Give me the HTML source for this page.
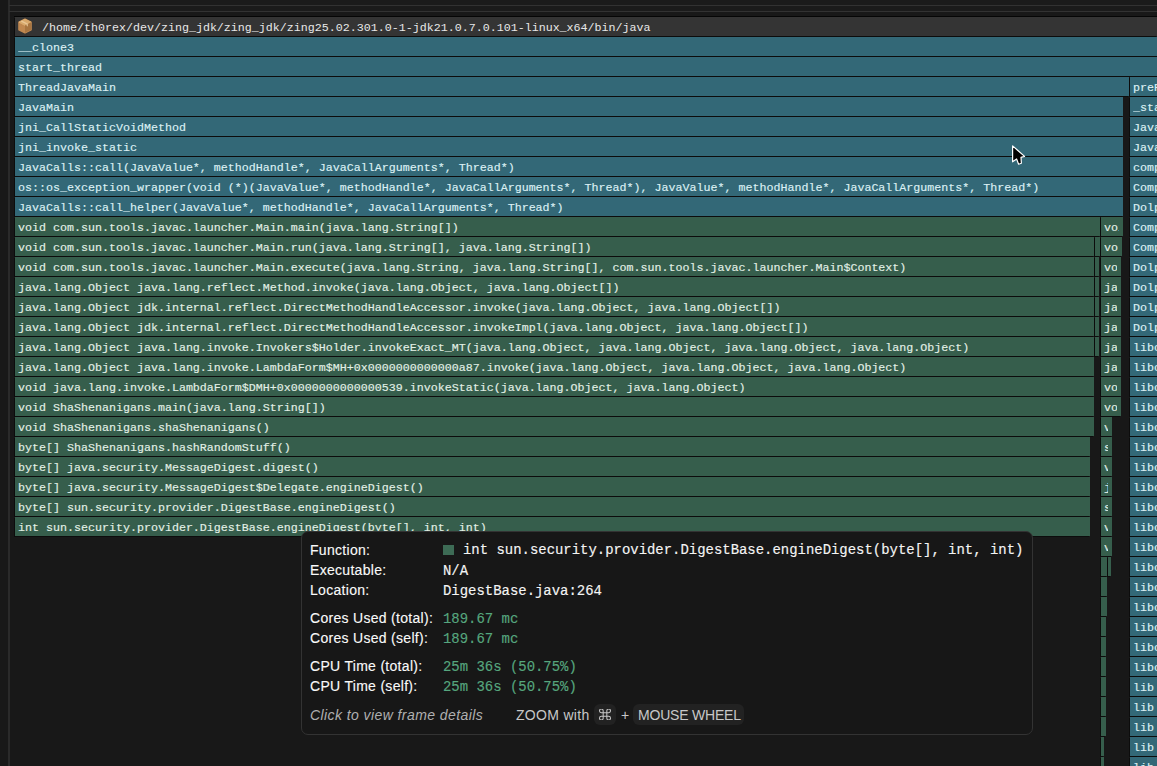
<!DOCTYPE html>
<html><head><meta charset="utf-8">
<style>
html,body{margin:0;padding:0;}
body{width:1157px;height:766px;overflow:hidden;background:#181818;position:relative;font-family:"Liberation Mono",monospace;}
.vl{position:absolute;left:8px;top:0;width:2px;height:766px;background:#2a2a2a;}
.hl{position:absolute;left:9px;height:1px;width:1148px;background:#323232;}
.topbg{position:absolute;left:9px;top:0;width:1148px;height:11px;background:#1b1b1b;}
.hdr{position:absolute;left:15px;top:17px;width:1142px;height:19px;background:#343434;color:#e8e8e8;font-size:11.67px;line-height:22px;box-shadow:-1px 1px 0 #0c0c0c;}
.hdr span{position:absolute;left:27px;top:0;white-space:pre;}
.box{position:absolute;left:3px;top:1px;width:14px;height:16px;}
.c{position:absolute;height:19px;line-height:23px;font-size:11.67px;white-space:pre;overflow:hidden;box-sizing:border-box;box-shadow:-1px 1px 0 #0c0c0c;}
.c span{display:block;overflow:hidden;margin:0 4px 0 3px;height:19px;}
.c.b{background:#336877;color:#dcf0f4;-webkit-text-stroke:0.15px currentColor;}
.c.g{background:#365e4c;color:#e2f0e6;-webkit-text-stroke:0.15px currentColor;}
.tip{position:absolute;left:301px;top:531px;width:732px;height:204px;box-sizing:border-box;background:#171717;border:1px solid #333;border-radius:7px;font-family:"Liberation Sans",sans-serif;color:#f0f0f0;font-size:14px;}
.tip .l{position:absolute;left:8px;white-space:pre;letter-spacing:0.3px;color:#fafafa;-webkit-text-stroke:0.12px #fafafa;}
.tip .v{position:absolute;left:141px;white-space:pre;font-family:"Liberation Mono",monospace;font-size:13.95px;margin-top:1px;-webkit-text-stroke:0.15px currentColor;color:#f4f4f4;}
.tip .gr{color:#56a67e;}
.sq{position:absolute;left:141px;top:13px;width:11px;height:10px;background:#3d6b55;}
.foot{position:absolute;top:172px;left:9px;white-space:pre;}
.tip .it{font-style:italic;color:#b0b0b0;letter-spacing:0.42px;-webkit-text-stroke:0;}
.tip .ft{color:#c8c8c8;-webkit-text-stroke:0;}
.kbd{position:absolute;background:#222222;border-radius:6px;color:#bdbdbd;}
</style></head><body>
<div class="topbg"></div>
<div class="vl"></div>
<div style="position:absolute;left:14px;top:16px;width:1143px;height:1px;background:#050505"></div>
<div class="hl" style="top:5px"></div>
<div class="hl" style="top:11px"></div>
<div class="hdr"><svg class="box" viewBox="0 0 14 16"><g stroke-linejoin="round"><polygon points="7,1.2 13,4.2 13,11.8 7,14.8 1,11.8 1,4.2" fill="#c08850" stroke="#c08850" stroke-width="1.6"/><polygon points="7,1.2 13,4.2 7,7.4 1,4.2" fill="#d9a96c" stroke="#d9a96c" stroke-width="1"/><polygon points="7,7.4 13,4.2 13,11.8 7,14.8" fill="#a87540"/><polygon points="4,2.6 10,5.8 10,8.6 8.6,7.9 8.6,6.6 2.6,3.4" fill="#f0d2a4" opacity="0.7"/></g></svg><span>/home/th0rex/dev/zing_jdk/zing_jdk/zing25.02.301.0-1-jdk21.0.7.0.101-linux_x64/bin/java</span></div>
<div class="c b" style="left:15px;top:37px;width:1235px"><span>__clone3</span></div>
<div class="c b" style="left:15px;top:57px;width:1235px"><span>start_thread</span></div>
<div class="c b" style="left:15px;top:77px;width:1114px"><span>ThreadJavaMain</span></div>
<div class="c b" style="left:15px;top:97px;width:1108px"><span>JavaMain</span></div>
<div class="c b" style="left:15px;top:117px;width:1108px"><span>jni_CallStaticVoidMethod</span></div>
<div class="c b" style="left:15px;top:137px;width:1108px"><span>jni_invoke_static</span></div>
<div class="c b" style="left:15px;top:157px;width:1108px"><span>JavaCalls::call(JavaValue*, methodHandle*, JavaCallArguments*, Thread*)</span></div>
<div class="c b" style="left:15px;top:177px;width:1108px"><span>os::os_exception_wrapper(void (*)(JavaValue*, methodHandle*, JavaCallArguments*, Thread*), JavaValue*, methodHandle*, JavaCallArguments*, Thread*)</span></div>
<div class="c b" style="left:15px;top:197px;width:1108px"><span>JavaCalls::call_helper(JavaValue*, methodHandle*, JavaCallArguments*, Thread*)</span></div>
<div class="c g" style="left:15px;top:217px;width:1085px"><span>void com.sun.tools.javac.launcher.Main.main(java.lang.String[])</span></div>
<div class="c g" style="left:15px;top:237px;width:1079px"><span>void com.sun.tools.javac.launcher.Main.run(java.lang.String[], java.lang.String[])</span></div>
<div class="c g" style="left:15px;top:257px;width:1079px"><span>void com.sun.tools.javac.launcher.Main.execute(java.lang.String, java.lang.String[], com.sun.tools.javac.launcher.Main$Context)</span></div>
<div class="c g" style="left:15px;top:277px;width:1079px"><span>java.lang.Object java.lang.reflect.Method.invoke(java.lang.Object, java.lang.Object[])</span></div>
<div class="c g" style="left:15px;top:297px;width:1079px"><span>java.lang.Object jdk.internal.reflect.DirectMethodHandleAccessor.invoke(java.lang.Object, java.lang.Object[])</span></div>
<div class="c g" style="left:15px;top:317px;width:1079px"><span>java.lang.Object jdk.internal.reflect.DirectMethodHandleAccessor.invokeImpl(java.lang.Object, java.lang.Object[])</span></div>
<div class="c g" style="left:15px;top:337px;width:1079px"><span>java.lang.Object java.lang.invoke.Invokers$Holder.invokeExact_MT(java.lang.Object, java.lang.Object, java.lang.Object, java.lang.Object)</span></div>
<div class="c g" style="left:15px;top:357px;width:1079px"><span>java.lang.Object java.lang.invoke.LambdaForm$MH+0x0000000000000a87.invoke(java.lang.Object, java.lang.Object, java.lang.Object)</span></div>
<div class="c g" style="left:15px;top:377px;width:1079px"><span>void java.lang.invoke.LambdaForm$DMH+0x0000000000000539.invokeStatic(java.lang.Object, java.lang.Object)</span></div>
<div class="c g" style="left:15px;top:397px;width:1079px"><span>void ShaShenanigans.main(java.lang.String[])</span></div>
<div class="c g" style="left:15px;top:417px;width:1079px"><span>void ShaShenanigans.shaShenanigans()</span></div>
<div class="c g" style="left:15px;top:437px;width:1075px"><span>byte[] ShaShenanigans.hashRandomStuff()</span></div>
<div class="c g" style="left:15px;top:457px;width:1075px"><span>byte[] java.security.MessageDigest.digest()</span></div>
<div class="c g" style="left:15px;top:477px;width:1075px"><span>byte[] java.security.MessageDigest$Delegate.engineDigest()</span></div>
<div class="c g" style="left:15px;top:497px;width:1075px"><span>byte[] sun.security.provider.DigestBase.engineDigest()</span></div>
<div class="c g" style="left:15px;top:517px;width:1075px"><span>int sun.security.provider.DigestBase.engineDigest(byte[], int, int)</span></div>
<div class="c b" style="left:1130px;top:77px;width:120px"><span>prePrepare</span></div>
<div class="c b" style="left:1130px;top:97px;width:120px"><span>_start</span></div>
<div class="c b" style="left:1130px;top:117px;width:120px"><span>JavaMain</span></div>
<div class="c b" style="left:1130px;top:137px;width:120px"><span>JavaCalls</span></div>
<div class="c b" style="left:1130px;top:157px;width:120px"><span>compile</span></div>
<div class="c b" style="left:1130px;top:177px;width:120px"><span>CompileBroker</span></div>
<div class="c b" style="left:1130px;top:197px;width:120px"><span>Dolphin</span></div>
<div class="c b" style="left:1130px;top:217px;width:120px"><span>Compile</span></div>
<div class="c b" style="left:1130px;top:237px;width:120px"><span>Compile</span></div>
<div class="c b" style="left:1130px;top:257px;width:120px"><span>Dolphin</span></div>
<div class="c b" style="left:1130px;top:277px;width:120px"><span>Dolphin</span></div>
<div class="c b" style="left:1130px;top:297px;width:120px"><span>Dolphin</span></div>
<div class="c b" style="left:1130px;top:317px;width:120px"><span>Dolphin</span></div>
<div class="c b" style="left:1130px;top:337px;width:120px"><span>libc.so</span></div>
<div class="c b" style="left:1130px;top:357px;width:120px"><span>libc.so</span></div>
<div class="c b" style="left:1130px;top:377px;width:120px"><span>libc.so</span></div>
<div class="c b" style="left:1130px;top:397px;width:120px"><span>libc.so</span></div>
<div class="c b" style="left:1130px;top:417px;width:120px"><span>libc.so</span></div>
<div class="c b" style="left:1130px;top:437px;width:120px"><span>libc.so</span></div>
<div class="c b" style="left:1130px;top:457px;width:120px"><span>libc.so</span></div>
<div class="c b" style="left:1130px;top:477px;width:120px"><span>libc.so</span></div>
<div class="c b" style="left:1130px;top:497px;width:120px"><span>libc.so</span></div>
<div class="c b" style="left:1130px;top:517px;width:120px"><span>libc.so</span></div>
<div class="c b" style="left:1130px;top:537px;width:120px"><span>libc.so</span></div>
<div class="c b" style="left:1130px;top:557px;width:120px"><span>libc.so</span></div>
<div class="c b" style="left:1130px;top:577px;width:120px"><span>libc.so</span></div>
<div class="c b" style="left:1130px;top:597px;width:120px"><span>libc.so</span></div>
<div class="c b" style="left:1130px;top:617px;width:120px"><span>libc.so</span></div>
<div class="c b" style="left:1130px;top:637px;width:120px"><span>libc.so</span></div>
<div class="c b" style="left:1130px;top:657px;width:120px"><span>libc.so</span></div>
<div class="c b" style="left:1130px;top:677px;width:120px"><span>lib jvm</span></div>
<div class="c b" style="left:1130px;top:697px;width:120px"><span>lib jvm</span></div>
<div class="c b" style="left:1130px;top:717px;width:120px"><span>lib jvm</span></div>
<div class="c b" style="left:1130px;top:737px;width:120px"><span>lib jvm</span></div>
<div class="c b" style="left:1130px;top:757px;width:120px"><span>lib jvm</span></div>
<div class="c g" style="left:1101px;top:217px;width:22px"><span>void</span></div>
<div class="c g" style="left:1095px;top:237px;width:5px"></div>
<div class="c g" style="left:1101px;top:237px;width:21px"><span>void</span></div>
<div class="c g" style="left:1095px;top:257px;width:4px"></div>
<div class="c g" style="left:1101px;top:257px;width:20px"><span>void</span></div>
<div class="c g" style="left:1095px;top:277px;width:4px"></div>
<div class="c g" style="left:1101px;top:277px;width:20px"><span>java</span></div>
<div class="c g" style="left:1095px;top:297px;width:4px"></div>
<div class="c g" style="left:1101px;top:297px;width:20px"><span>java</span></div>
<div class="c g" style="left:1095px;top:317px;width:4px"></div>
<div class="c g" style="left:1101px;top:317px;width:20px"><span>java</span></div>
<div class="c g" style="left:1095px;top:337px;width:4px"></div>
<div class="c g" style="left:1101px;top:337px;width:20px"><span>java</span></div>
<div class="c g" style="left:1101px;top:357px;width:20px"><span>java</span></div>
<div class="c g" style="left:1101px;top:377px;width:20px"><span>void</span></div>
<div class="c g" style="left:1101px;top:397px;width:20px"><span>void</span></div>
<div class="c g" style="left:1101px;top:417px;width:11px"><span>void</span></div>
<div class="c g" style="left:1101px;top:437px;width:11px"><span>s</span></div>
<div class="c g" style="left:1101px;top:457px;width:11px"><span>v</span></div>
<div class="c g" style="left:1101px;top:477px;width:11px"><span>j</span></div>
<div class="c g" style="left:1101px;top:497px;width:11px"><span>s</span></div>
<div class="c g" style="left:1101px;top:517px;width:11px"><span>v</span></div>
<div class="c g" style="left:1101px;top:537px;width:11px"><span>v</span></div>
<div class="c g" style="left:1101px;top:557px;width:6px"></div>
<div class="c g" style="left:1108px;top:557px;width:3px"></div>
<div class="c g" style="left:1101px;top:577px;width:6px"></div>
<div class="c g" style="left:1101px;top:597px;width:6px"></div>
<div class="c g" style="left:1101px;top:617px;width:5px"></div>
<div class="c g" style="left:1101px;top:637px;width:5px"></div>
<div class="c g" style="left:1101px;top:657px;width:5px"></div>
<div class="c g" style="left:1101px;top:677px;width:5px"></div>
<div class="c g" style="left:1101px;top:697px;width:5px"></div>
<div class="c g" style="left:1101px;top:717px;width:5px"></div>
<div class="c g" style="left:1101px;top:737px;width:3px"></div>
<div class="c g" style="left:1101px;top:757px;width:3px"></div>
<svg style="position:absolute;left:1011px;top:144px" width="16" height="22" viewBox="0 0 16 22"><polygon points="1.6,1.9 1.6,17.8 5.6,15 7.6,20.2 10.4,19.3 10,13.4 13.6,12.4" fill="#000" stroke="#fff" stroke-width="1.2" stroke-linejoin="round"/></svg>
<div class="tip">
 <div class="l" style="top:9.5px">Function:</div><div class="sq"></div><div class="v" style="top:9px;left:161px">int sun.security.provider.DigestBase.engineDigest(byte[], int, int)</div>
 <div class="l" style="top:29.5px">Executable:</div><div class="v" style="top:30px">N/A</div>
 <div class="l" style="top:49.5px">Location:</div><div class="v" style="top:50px">DigestBase.java:264</div>
 <div class="l" style="top:77.5px">Cores Used (total):</div><div class="v gr" style="top:78px">189.67 mc</div>
 <div class="l" style="top:97.5px">Cores Used (self):</div><div class="v gr" style="top:98px">189.67 mc</div>
 <div class="l" style="top:125.5px">CPU Time (total):</div><div class="v gr" style="top:126px">25m 36s (50.75%)</div>
 <div class="l" style="top:145.5px">CPU Time (self):</div><div class="v gr" style="top:146px">25m 36s (50.75%)</div>
 <div class="l it" style="top:175px">Click to view frame details</div>
 <div class="l ft" style="top:175px;left:214px">ZOOM with</div>
 <div class="kbd" style="left:292px;top:172px;width:22px;height:21px"></div>
 <svg style="position:absolute;left:297px;top:177px" width="12" height="11" viewBox="0 0 12 12"><path d="M4,4 V2 A2,2 0 1 0 2,4 H10 A2,2 0 1 0 8,2 V10 A2,2 0 1 0 10,8 H2 A2,2 0 1 0 4,10 Z" fill="none" stroke="#c8c8c8" stroke-width="1.1"/></svg>
 <div class="l ft" style="top:175px;left:319px">+</div>
 <div class="kbd" style="left:331px;top:172px;width:111px;height:21px"></div>
 <div class="l ft" style="top:175px;left:336px;letter-spacing:-0.2px">MOUSE WHEEL</div>
</div>
</body></html>
